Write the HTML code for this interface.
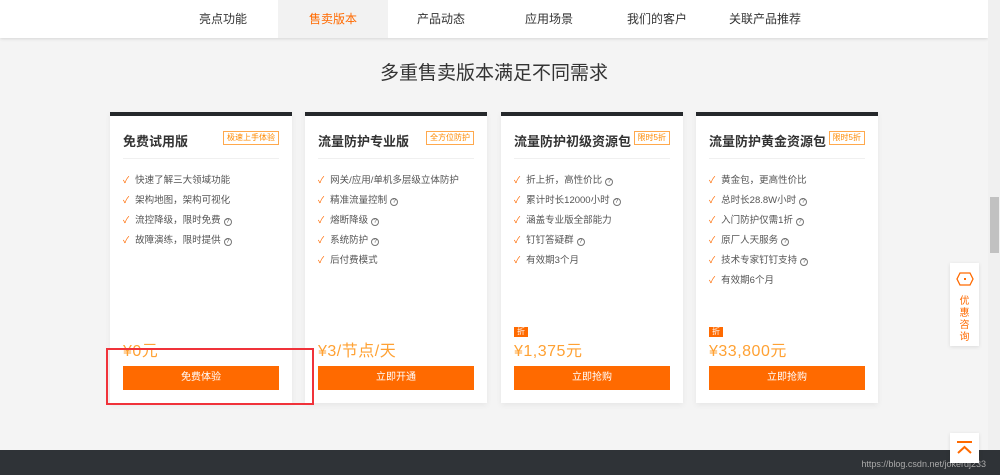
<!DOCTYPE html>
<html><head><meta charset="utf-8"><style>
*{margin:0;padding:0;box-sizing:border-box}
body{width:1000px;height:475px;overflow:hidden;background:#f4f4f4;font-family:"Liberation Sans","Noto Sans CJK SC",sans-serif;position:relative}
.nav{position:absolute;top:0;left:0;width:988px;height:38px;background:#fff;box-shadow:0 1px 3px rgba(0,0,0,.12)}
.nav span{position:absolute;top:0;height:38px;line-height:38px;font-size:12px;color:#333;text-align:center}
.nav .act{background:#f2f2f2;color:#ff6a00}
h2{position:absolute;top:58px;left:0;width:988px;text-align:center;font-size:19px;font-weight:normal;color:#333}
.card{position:absolute;top:112px;width:182px;height:291px;background:#fff;border-top:4px solid #25282b;box-shadow:0 2px 6px rgba(0,0,0,.06)}
.t{position:absolute;left:13px;top:15px;font-size:13px;font-weight:bold;color:#333}
.tag{position:absolute;right:13px;top:15px;border:1px solid #ffa94d;color:#ff8a00;font-size:8px;padding:1px 3px;line-height:10px;background:#fff}
.hr{position:absolute;left:13px;right:13px;top:42px;border-top:1px solid #f0f0f0}
ul{position:absolute;left:13px;top:57px;list-style:none}
li{font-size:9.5px;color:#555;height:20px;line-height:14px}
li:before{content:"✓";color:#ff6a00;font-size:9px;margin-right:6px}
li i{font-style:normal;display:inline-block;width:8px;height:8px;border:1px solid #777;border-radius:50%;font-size:6px;line-height:6px;text-align:center;margin-left:3px;vertical-align:0}
.zhe{position:absolute;left:13px;top:211px;background:#ff6a00;color:#fff;font-size:8px;padding:0 3px;line-height:10px}
.price{position:absolute;left:13px;top:221px;font-size:16px;color:#ffa133;letter-spacing:.5px}
.btn{position:absolute;left:13px;top:250px;width:156px;height:24px;background:#ff6a00;color:#fff;font-size:10px;text-align:center;line-height:24px}
</style></head><body>
<div class="nav">
<span style="left:193px;width:60px">亮点功能</span>
<span class="act" style="left:278px;width:110px">售卖版本</span>
<span style="left:411px;width:60px">产品动态</span>
<span style="left:519px;width:60px">应用场景</span>
<span style="left:622px;width:70px">我们的客户</span>
<span style="left:725px;width:80px">关联产品推荐</span>
</div>
<h2>多重售卖版本满足不同需求</h2>

<div class="card" style="left:110px"><div class="t">免费试用版</div><div class="tag">极速上手体验</div><div class="hr"></div>
<ul><li>快速了解三大领域功能</li><li>架构地图，架构可视化</li><li>流控降级，限时免费<i>?</i></li><li>故障演练，限时提供<i>?</i></li></ul>
<div class="price">¥0元</div><div class="btn">免费体验</div></div>

<div class="card" style="left:305px"><div class="t">流量防护专业版</div><div class="tag">全方位防护</div><div class="hr"></div>
<ul><li>网关/应用/单机多层级立体防护</li><li>精准流量控制<i>?</i></li><li>熔断降级<i>?</i></li><li>系统防护<i>?</i></li><li>后付费模式</li></ul>
<div class="price">¥3/节点/天</div><div class="btn">立即开通</div></div>

<div class="card" style="left:501px"><div class="t">流量防护初级资源包</div><div class="tag">限时5折</div><div class="hr"></div>
<ul><li>折上折，高性价比<i>?</i></li><li>累计时长12000小时<i>?</i></li><li>涵盖专业版全部能力</li><li>钉钉答疑群<i>?</i></li><li>有效期3个月</li></ul>
<div class="zhe">折</div><div class="price">¥1,375元</div><div class="btn">立即抢购</div></div>

<div class="card" style="left:696px"><div class="t">流量防护黄金资源包</div><div class="tag">限时5折</div><div class="hr"></div>
<ul><li>黄金包，更高性价比</li><li>总时长28.8W小时<i>?</i></li><li>入门防护仅需1折<i>?</i></li><li>原厂人天服务<i>?</i></li><li>技术专家钉钉支持<i>?</i></li><li>有效期6个月</li></ul>
<div class="zhe">折</div><div class="price">¥33,800元</div><div class="btn">立即抢购</div></div>

<div style="position:absolute;left:106px;top:348px;width:208px;height:57px;border:2px solid #f0323a"></div>

<div style="position:absolute;left:950px;top:263px;width:29px;height:83px;background:#fff;box-shadow:0 1px 4px rgba(0,0,0,.1);text-align:center">
<svg width="18" height="14" viewBox="0 0 18 14" style="margin-top:9px"><path d="M4 1H14L17 7L14 13H4L1 7Z" fill="none" stroke="#ff6a00" stroke-width="1.3"/><rect x="8" y="6" width="2" height="2" fill="#ff6a00"/></svg>
<div style="font-size:10px;color:#ff6a00;line-height:12px;width:12px;margin:5px auto 0">优惠咨询</div></div>

<div style="position:absolute;left:0;top:450px;width:1000px;height:25px;background:#2f3337"></div>
<div style="position:absolute;right:14px;top:459px;font-size:9px;color:#aaa">https://blog.csdn.net/jokerdj233</div>
<div style="position:absolute;left:950px;top:433px;width:29px;height:30px;background:#fff;box-shadow:0 1px 4px rgba(0,0,0,.1)">
<svg width="29" height="30"><path d="M7 9H22" stroke="#ff6a00" stroke-width="2"/><path d="M8 20L14.5 14L21 20" fill="none" stroke="#ff6a00" stroke-width="2"/></svg></div>

<div style="position:absolute;left:988px;top:0;width:12px;height:450px;background:#f0f0f0"></div>
<div style="position:absolute;left:990px;top:197px;width:9px;height:56px;background:#c1c1c1"></div>
</body></html>
